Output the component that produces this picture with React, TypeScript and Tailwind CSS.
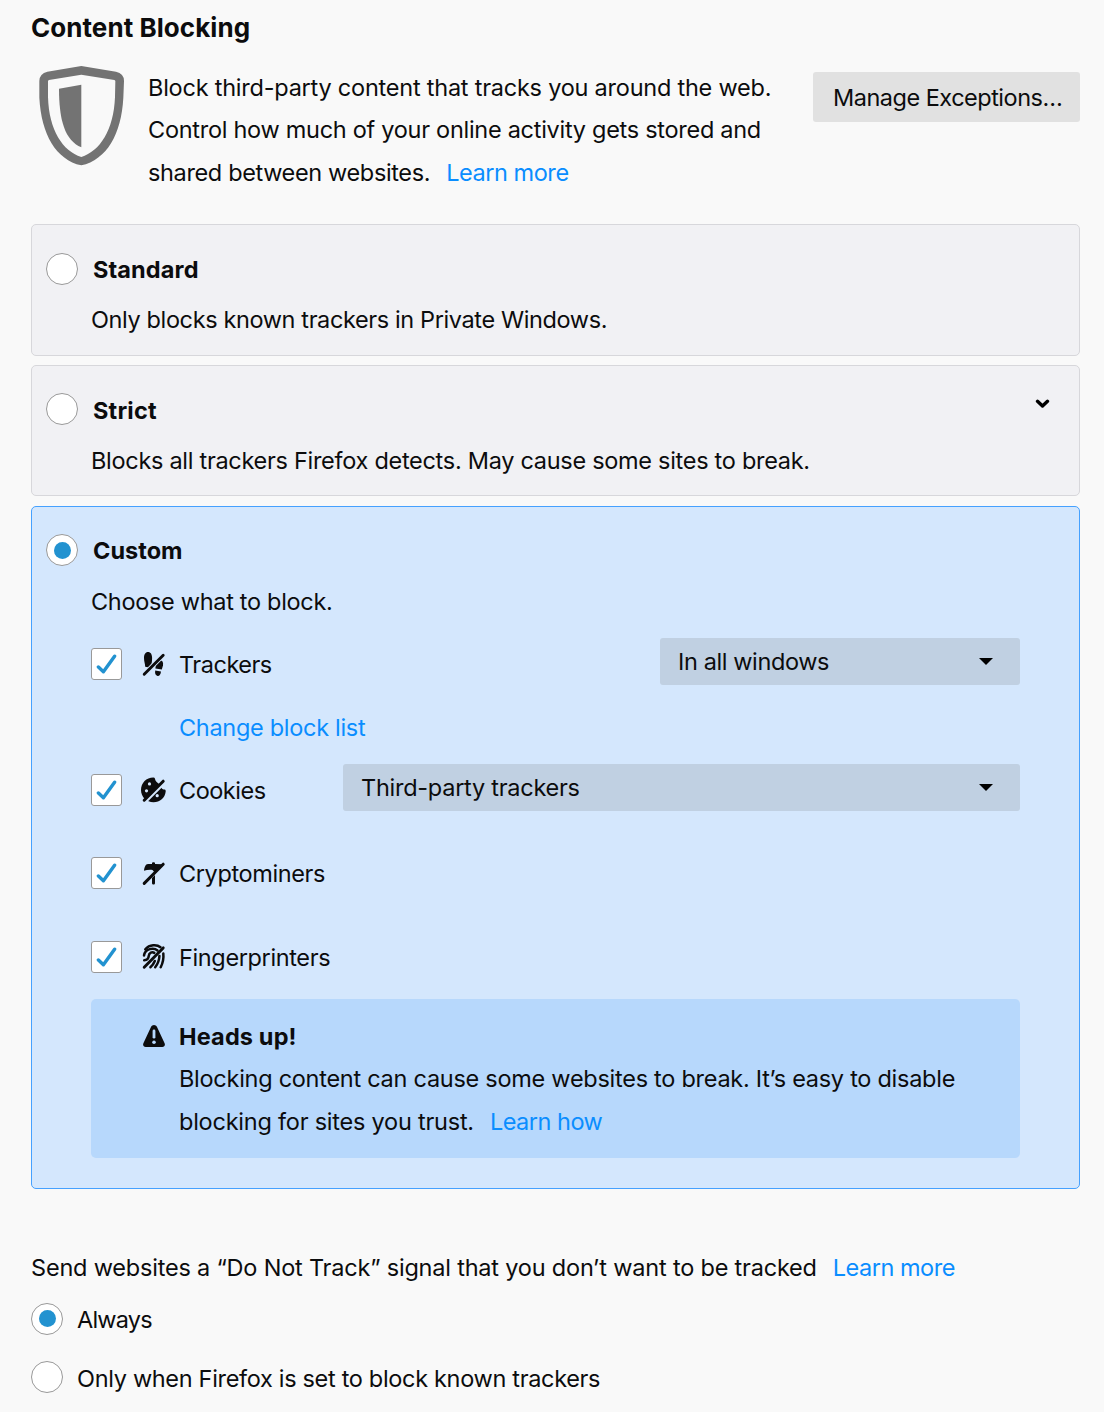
import type { ReactNode } from "react";

function Radio({ checked = false }: { checked?: boolean }) {
  return (
    <span className="flex size-8 shrink-0 items-center justify-center rounded-full border border-[#999] bg-white">
      {checked && <span className="size-[17px] rounded-full bg-[#2292d0]" />}
    </span>
  );
}

function Checkbox() {
  return (
    <span className="flex h-8 w-[31px] shrink-0 items-center justify-center rounded-[3px] border border-[#999] bg-white">
      <svg width="21" height="22" viewBox="0 0 21 22" fill="none" stroke="#2292d0" strokeWidth="3.4" strokeLinecap="round" strokeLinejoin="round">
        <path d="M2.400 14 7.400 18.800 18.600 3.200" />
      </svg>
    </span>
  );
}

function Icon({ children }: { children: ReactNode }) {
  return (
    <svg className="ml-[14px] size-9 shrink-0" viewBox="0 0 36 36" fill="#0c0c0d">
      {children}
    </svg>
  );
}

function TrackersIcon() {
  return (
    <Icon>
      <path d="M12 6c2.700 0 4 2.400 4.100 5.800 0 2-.1 3.800-.5 5.600L12.800 21.600 9.200 20.800C9.100 17.500 8 15.500 8 12 8 8.500 9.400 6 12 6z" />
      <path d="M24.500 14.500c2 0 2.900 2 2.500 4.800l-1.200 4.200-6.400-.9.500-4z" />
      <path d="M19.200 24.600l5.800.8c-.4 3-1.500 4.700-3.400 4.500-2-.2-2.900-2-2.400-5.300z" />
      <path d="M7.800 28.600 28.400 8" fill="none" stroke="#d4e7fd" strokeWidth="4.600" />
      <path d="M8.200 28.300 27.200 9.300" fill="none" stroke="#0c0c0d" strokeWidth="2.900" strokeLinecap="round" />
    </Icon>
  );
}

function CookiesIcon() {
  return (
    <Icon>
      <path d="M17.500 5.600C19 5.800 19 7.200 19.500 8.500 20.500 10.500 22.500 11 24 13c.8 2 2 4.500 3.500 4.500 1.500 0 2.400.2 2.200 2C29 26 24 30.300 17.500 30.300 10.500 30.300 5 25 5 18S10.500 5.500 17.500 5.600z" />
      <circle cx="13.500" cy="11.900" r="1.600" fill="#d4e7fd" />
      <circle cx="10.500" cy="18.800" r="1.600" fill="#d4e7fd" />
      <circle cx="21.200" cy="23.700" r="1.600" fill="#d4e7fd" />
      <path d="M8.800 30 30.500 8.300" fill="none" stroke="#d4e7fd" strokeWidth="3.600" />
      <path d="M8.200 28.200 27.200 9.200" fill="none" stroke="#0c0c0d" strokeWidth="3" strokeLinecap="round" />
    </Icon>
  );
}

function CryptominersIcon() {
  return (
    <Icon>
      <path d="M8 15.800C8.300 12.500 9.500 9 12 9H16V8c0-1 3-1 3 0v1l8 .3-8.500 8-2-2.300C13.500 14.600 10.500 15 8 15.800z" />
      <path d="M16 23l3-3v8c0 2-3 2-3 0z" />
      <path d="M8.200 28.400 27.200 9.200" fill="none" stroke="#0c0c0d" strokeWidth="3" strokeLinecap="round" />
    </Icon>
  );
}

function FingerprintersIcon() {
  return (
    <Icon>
      <g fill="none" stroke="#0c0c0d" strokeWidth="2.500" strokeLinecap="round">
        <path d="M9.300 10.200C13.500 5.200 21 5.200 24.500 8.200" />
        <path d="M8 16.500C9 9.200 18 8.500 21.500 11.500" />
        <path d="M8.200 21.300c3.200-.3 4.300-1.300 4.500-4.200.3-3.600 3.500-4.600 5.600-3.200" />
        <path d="M27.300 14.500c.5 4.500-.2 9-2.600 13.700" />
        <path d="M23.400 17c-.2 4.600-1.500 7.800-4.200 11.200" />
        <path d="M18.800 22c-1 2.500-2.400 4.600-4.400 6.300" />
      </g>
      <path d="M8.200 28.300 27.200 8.900" fill="none" stroke="#0c0c0d" strokeWidth="2.900" strokeLinecap="round" />
    </Icon>
  );
}

function Option({ label, className, icon, children }: { label: string; className: string; icon: ReactNode; children?: ReactNode }) {
  return (
    <div className="flex h-[47px] items-center">
      <Checkbox />
      {icon}
      <span className={"ml-[7px] pt-[3px] " + className}>{label}</span>
      {children}
    </div>
  );
}

function Select({ label, className }: { label: string; className: string }) {
  return (
    <div className={"mt-[-5px] ml-auto flex h-[47px] items-center justify-between rounded-[3px] bg-[#c0d0e2] pr-[27px] pl-[18px] " + className}>
      <span className="pt-[2px]">{label}</span>
      <svg width="14" height="7" viewBox="0 0 14 7">
        <path d="M0 0h14L7 7z" fill="#000" />
      </svg>
    </div>
  );
}

export default function App() {
  return (
    <div className="h-[1412px] overflow-hidden bg-[#f9f9f9] pt-[7px] pr-6 pl-[31px] font-['Inter',sans-serif] text-[23.5px] leading-[42.5px] whitespace-nowrap text-[#0c0c0d]">
      <h1 className="h-[59px] text-[26px] font-bold tracking-[0.06px]">Content Blocking</h1>

      <header className="flex h-[127.500px] items-start">
        <svg className="ml-2 shrink-0" width="86" height="100" viewBox="57 197 258 300" fill="#737373" fillRule="evenodd">
          <path d="M184 197 288 214Q312 219 312 242L310 292C304 402 260 478 184 495 108 478 64 402 58 292V242Q59 219 82 214ZM184 223 283 239Q286 240 286 243L285 290C281 390 240 452 184 470 128 452 87 390 84 290V243Q84 240 87 239Z" />
          <path d="M184 253 117 265C117 360 135 420 184 441Z" />
        </svg>
        <div className="mt-[0.600px] ml-[23px] flex-1">
          <p className="tracking-[-0.23px]">Block third-party content that tracks you around the web.</p>
          <p className="tracking-[-0.28px]">Control how much of your online activity gets stored and</p>
          <p className="tracking-[-0.36px]">
            shared between websites.
            <a className="ml-[16px] tracking-[-0.45px] text-[#0a8dff]">Learn more</a>
          </p>
        </div>
        <button className="mt-[6px] flex h-[50px] w-[267px] items-center rounded-[3px] bg-[#e1e1e1] pt-[2px] pl-[20px] tracking-[-0.5px]">
          Manage Exceptions…
        </button>
      </header>

      <section className="mt-[30.500px] h-[132px] rounded-[5px] border border-[#d7d7db] bg-[#f1f1f4] pl-[14px] pt-[23px]">
        <div className="flex items-center">
          <Radio />
          <h2 className="mt-[1px] mb-[-1px] ml-[15px] font-bold tracking-[0.12px]">Standard</h2>
        </div>
        <p className="mt-[8px] ml-[45px] tracking-[-0.38px]">Only blocks known trackers in Private Windows.</p>
      </section>

      <section className="mt-[9px] h-[131px] rounded-[5px] border border-[#d7d7db] bg-[#f1f1f4] pl-[14px] pt-[22px]">
        <div className="flex items-center">
          <Radio />
          <h2 className="mt-[2px] mb-[-2px] ml-[15px] font-bold tracking-[0.2px]">Strict</h2>
          <svg className="mt-[-10px] mr-[29px] ml-auto" width="15" height="10" viewBox="0 0 15 10" fill="none" stroke="#000" strokeWidth="3.400" strokeLinecap="round" strokeLinejoin="round">
            <path d="M2.500 2.300 7.500 7 12.500 2.300" />
          </svg>
        </div>
        <p className="mt-[9px] ml-[45px] tracking-[-0.29px]">Blocks all trackers Firefox detects. May cause some sites to break.</p>
      </section>

      <section className="mt-[10px] h-[683px] rounded-[5px] border border-[#45a1ff] bg-[#d4e7fd] pt-[22px] pr-[59px] pl-[14px]">
        <div className="flex items-center">
          <Radio checked />
          <h2 className="mt-[1px] mb-[-1px] ml-[15px] font-bold tracking-[0.02px]">Custom</h2>
        </div>
        <div className="ml-[45px]">
          <p className="mt-[9px] tracking-[-0.31px]">Choose what to block.</p>
          <div className="mt-[17px]">
            <Option label="Trackers" className="tracking-[-0.48px]" icon={<TrackersIcon />}>
              <Select label="In all windows" className="w-[360px] tracking-[-0.39px]" />
            </Option>
          </div>
          <a className="mt-[20px] ml-[88px] block h-[42px] tracking-[-0.3px] text-[#0a8dff]">Change block list</a>
          <div className="mt-[17px]">
            <Option label="Cookies" className="tracking-[-0.5px]" icon={<CookiesIcon />}>
              <Select label="Third-party trackers" className="w-[677px] tracking-[-0.26px]" />
            </Option>
          </div>
          <div className="mt-[36.500px]">
            <Option label="Cryptominers" className="tracking-[-0.38px]" icon={<CryptominersIcon />} />
          </div>
          <div className="mt-[36.500px]">
            <Option label="Fingerprinters" className="tracking-[-0.37px]" icon={<FingerprintersIcon />} />
          </div>
          <div className="mt-[19px] flex h-[159px] rounded-[5px] bg-[#b7d8fc] pt-[17px] pl-[52px]">
            <svg className="mt-[9px] shrink-0" width="22" height="22" viewBox="0 0 22 22">
              <path d="M11 0C12.300 0 13.300.7 13.900 1.800L21.600 18.200C22.500 20 21.300 22 19.300 22H2.700C.7 22-.5 20 .4 18.200L8.100 1.800C8.700.7 9.700 0 11 0z" fill="#0c0c0d" />
              <path d="M11 6v6.200" stroke="#b7d8fc" strokeWidth="2.800" strokeLinecap="round" />
              <circle cx="11" cy="17.200" r="1.800" fill="#b7d8fc" />
            </svg>
            <div className="ml-[14px]">
              <h3 className="h-[42px] font-bold tracking-[0.15px]">Heads up!</h3>
              <p className="tracking-[-0.27px]">Blocking content can cause some websites to break. It’s easy to disable</p>
              <p className="tracking-[-0.23px]">
                blocking for sites you trust.
                <a className="ml-[16px] tracking-[-0.5px] text-[#0a8dff]">Learn how</a>
              </p>
            </div>
          </div>
        </div>
      </section>

      <footer className="mt-[58px]">
        <p className="tracking-[-0.2px]">
          Send websites a “Do Not Track” signal that you don’t want to be tracked
          <a className="ml-[16px] tracking-[-0.48px] text-[#0a8dff]">Learn more</a>
        </p>
        <div className="mt-[8px] flex items-center">
          <Radio checked />
          <span className="mt-[1px] mb-[-1px] ml-[14px] tracking-[-0.8px]">Always</span>
        </div>
        <div className="mt-[16px] flex items-center">
          <Radio />
          <span className="mt-[2px] mb-[-2px] ml-[14px] tracking-[-0.32px]">Only when Firefox is set to block known trackers</span>
        </div>
      </footer>
    </div>
  );
}
